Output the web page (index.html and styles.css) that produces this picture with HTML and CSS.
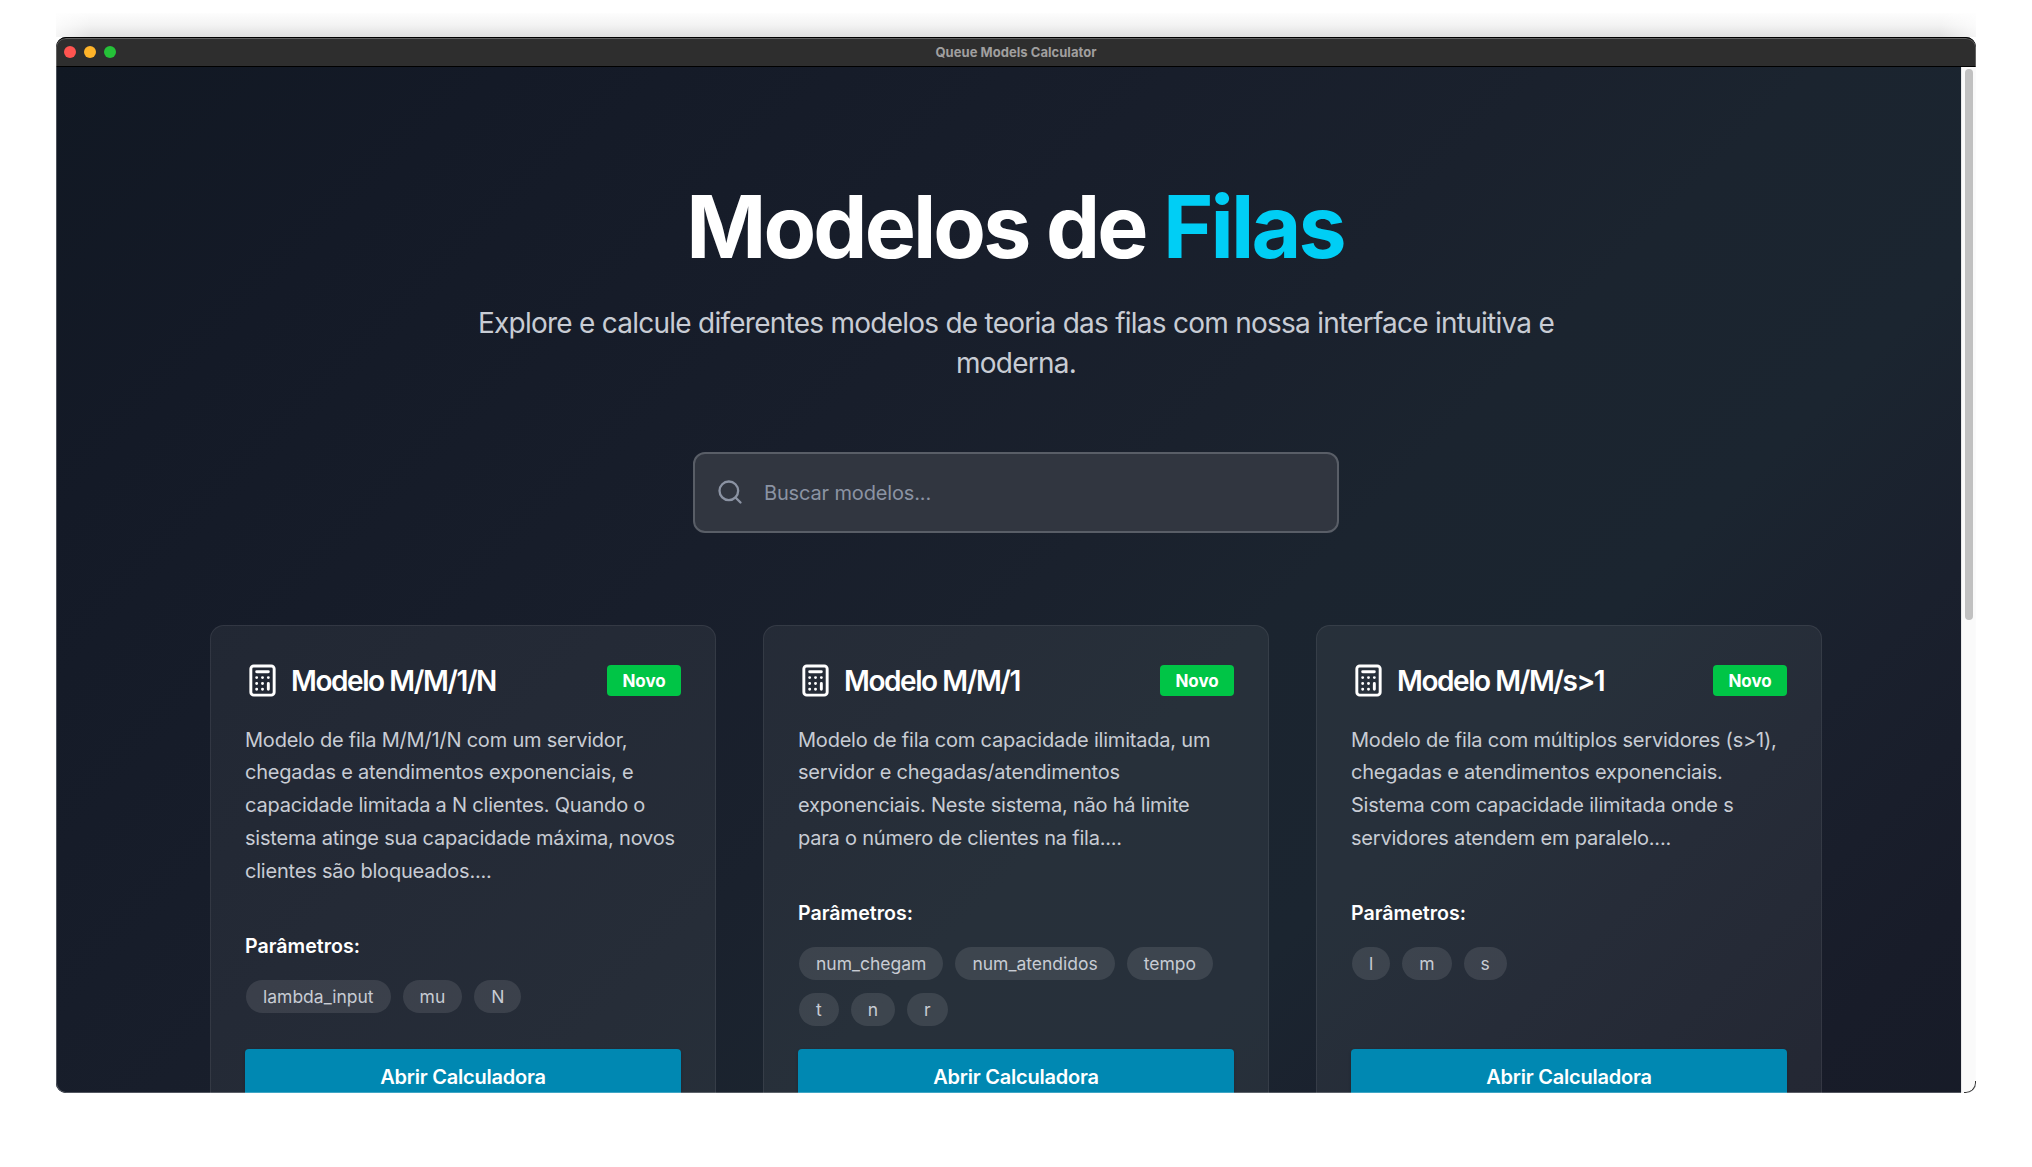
FILE: index.html
```
<!DOCTYPE html>
<html lang="pt-BR">
<head>
<meta charset="utf-8">
<title>Queue Models Calculator</title>
<link rel="stylesheet" href="styles.css">
</head>
<body>
<svg class="sprite" aria-hidden="true">
  <symbol id="calculator" viewBox="0 0 24 24">
    <rect x="4" y="2" width="16" height="20" rx="2"/>
    <path d="M8 6h8M16 14v4M16 10h.01M12 10h.01M8 10h.01M12 14h.01M8 14h.01M12 18h.01M8 18h.01"/>
  </symbol>
  <symbol id="search" viewBox="0 0 24 24">
    <circle cx="11" cy="11" r="8"/>
    <path d="m21 21-4.3-4.3"/>
  </symbol>
</svg>
<div class="stage">
  <div class="glow"></div>
  <div class="window">
    <header class="titlebar">
      <div class="lights"><i class="light close"></i><i class="light minimize"></i><i class="light maximize"></i></div>
      <span class="window-title">Queue Models Calculator</span>
    </header>
    <div class="viewport">
      <main class="page">
        <section class="hero">
          <h1 class="headline">Modelos de <span class="accent">Filas</span></h1>
          <p class="lead">Explore e calcule diferentes modelos de teoria das filas com nossa interface intuitiva e moderna.</p>
          <div class="search">
            <svg class="search-icon"><use href="#search"/></svg>
            <span class="placeholder">Buscar modelos...</span>
          </div>
        </section>
        <section class="cards">
          <article class="card">
            <div class="card-head">
              <svg class="calc-icon"><use href="#calculator"/></svg>
              <h2 class="card-title">Modelo M/M/1/N</h2>
              <span class="badge">Novo</span>
            </div>
            <p class="desc">Modelo de fila M/M/1/N com um servidor, chegadas e atendimentos exponenciais, e capacidade limitada a N clientes. Quando o sistema atinge sua capacidade máxima, novos clientes são bloqueados....</p>
            <h3 class="params-title">Parâmetros:</h3>
            <div class="params"><span class="pill">lambda_input</span><span class="pill">mu</span><span class="pill">N</span></div>
            <div class="button">Abrir Calculadora</div>
          </article>
          <article class="card">
            <div class="card-head">
              <svg class="calc-icon"><use href="#calculator"/></svg>
              <h2 class="card-title">Modelo M/M/1</h2>
              <span class="badge">Novo</span>
            </div>
            <p class="desc">Modelo de fila com capacidade ilimitada, um servidor e chegadas/atendimentos exponenciais. Neste sistema, não há limite para o número de clientes na fila....</p>
            <h3 class="params-title">Parâmetros:</h3>
            <div class="params"><span class="pill">num_chegam</span><span class="pill">num_atendidos</span><span class="pill">tempo</span><span class="pill">t</span><span class="pill">n</span><span class="pill">r</span></div>
            <div class="button">Abrir Calculadora</div>
          </article>
          <article class="card">
            <div class="card-head">
              <svg class="calc-icon"><use href="#calculator"/></svg>
              <h2 class="card-title">Modelo M/M/s&gt;1</h2>
              <span class="badge">Novo</span>
            </div>
            <p class="desc">Modelo de fila com múltiplos servidores (s&gt;1), chegadas e atendimentos exponenciais. Sistema com capacidade ilimitada onde s servidores atendem em paralelo....</p>
            <h3 class="params-title">Parâmetros:</h3>
            <div class="params"><span class="pill">l</span><span class="pill">m</span><span class="pill">s</span></div>
            <div class="button">Abrir Calculadora</div>
          </article>
        </section>
      </main>
      <div class="scrollbar"><div class="thumb"></div></div>
    </div>
    <div class="rim"></div>
  </div>
</div>
</body>
</html>
```
FILE: styles.css
```
* { box-sizing: border-box; }

body {
  margin: 0;
  background: #fff;
  font-family: Inter, "Liberation Sans", sans-serif;
  overflow: hidden;
}

h1, h2, h3, p { margin: 0; }

.sprite { display: none; }

.stage {
  width: 1920px;
  height: 1167px;
  margin-left: 56px;
  padding-top: 13px;
}

/* soft window shadow above the title bar */
.glow {
  height: 24px;
  background:
    linear-gradient(to right, rgba(255,255,255,.7), rgba(255,255,255,0) 36px, rgba(255,255,255,0) calc(100% - 36px), rgba(255,255,255,.7)),
    linear-gradient(#fdfdfd, #f3f3f3 50%, #dfdfdf);
}

.window {
  position: relative;
  height: 1056px;
  overflow: hidden;
  border-radius: 10px;
  display: flex;
  flex-direction: column;
  background: #141b27;
}

.titlebar {
  height: 30px;
  flex: none;
  display: grid;
  grid-template-columns: 1fr auto 1fr;
  align-items: center;
  padding: 0 8px;
  background: #2e2e2e;
  border-bottom: 1px solid #000;
}

.lights { display: flex; gap: 8px; }
.light { width: 12px; height: 12px; border-radius: 50%; }
.close { background: #ff5450; }
.minimize { background: #ffb429; }
.maximize { background: #25c138; }

.window-title {
  font-size: 13px;
  font-weight: 700;
  line-height: 16px;
  letter-spacing: .04px;
  color: #a09f9f;
}

.viewport {
  flex: 1;
  display: flex;
  min-height: 0;
  overflow: hidden;
}

.page {
  width: 1905px;
  height: 1850px;
  flex: none;
  padding: 117px 0 0 154px;
  background: linear-gradient(135deg, #111823 0%, #141a27 12%, #181e2b 30%, #1a212d 40%, #1b242f 47%, #1b2530 56%, #1a202d 64%, #181c29 73%, #161b27 82%, #101722 100%);
}

.hero {
  width: 1612px;
  display: flex;
  flex-direction: column;
  align-items: center;
  text-align: center;
}

.headline {
  font-size: 86px;
  font-weight: 700;
  line-height: 86px;
  letter-spacing: -2.9px;
  color: #fff;
  margin-left: -2px;
}

.accent { color: #00cef5; }

.lead {
  width: 1130px;
  margin-top: 32.5px;
  font-size: 28px;
  line-height: 40px;
  letter-spacing: -.75px;
  color: #c8ccd4;
}

.search {
  width: 646px;
  height: 81px;
  margin-top: 69.5px;
  padding-left: 21px;
  display: flex;
  align-items: center;
  gap: 20px;
  border: 2px solid #595e67;
  border-radius: 12px;
  background: #313640;
}

.search-icon {
  width: 28px;
  height: 28px;
  margin-bottom: 2px;
  fill: none;
  stroke: #8b93a3;
  stroke-width: 2;
  stroke-linecap: round;
}

.placeholder {
  font-size: 20px;
  line-height: 28px;
  letter-spacing: -.15px;
  color: #8b93a3;
}

.cards {
  width: 1612px;
  margin-top: 92px;
  display: grid;
  grid-template-columns: repeat(3, 506px);
  justify-content: space-between;
}

.card {
  display: flex;
  flex-direction: column;
  padding: 36.5px 34px 34px;
  border: 1px solid rgba(255,255,255,.07);
  border-radius: 14px;
  background: rgba(255,255,255,.055);
}

.card-head { display: flex; align-items: center; height: 36px; }

.calc-icon {
  width: 35px;
  height: 35px;
  flex: none;
  fill: none;
  stroke: #fff;
  stroke-width: 2;
  stroke-linecap: round;
  stroke-linejoin: round;
}

.card-title {
  flex: 1;
  margin-left: 11px;
  font-size: 28px;
  font-weight: 600;
  line-height: 36px;
  letter-spacing: -1.43px;
  color: #fff;
}

.badge {
  width: 74px;
  height: 31px;
  border-radius: 4px;
  background: #00c546;
  color: #fff;
  font-size: 17px;
  font-weight: 700;
  line-height: 32px;
  letter-spacing: -.1px;
  text-align: center;
}

.desc {
  margin-top: 25.1px;
  font-size: 20px;
  line-height: 32.85px;
  letter-spacing: -.21px;
  color: #c8ccd4;
}

.params-title {
  margin-top: 44.2px;
  font-size: 19.6px;
  font-weight: 600;
  line-height: 29px;
  color: #fff;
}

.params {
  display: flex;
  flex-wrap: wrap;
  gap: 13px 12px;
  margin: 19px 0 22.8px 1px;
}

.pill {
  height: 33px;
  padding: 0 17px;
  border-radius: 17px;
  background: rgba(255,255,255,.1);
  color: #c8ccd4;
  font-size: 17.5px;
  line-height: 34px;
}

.button {
  margin-top: auto;
  height: 56px;
  border-radius: 4px;
  background: #0088b2;
  box-shadow: 0 1px 3px rgba(0,0,0,.2);
  color: #fff;
  font-size: 20px;
  font-weight: 600;
  line-height: 56px;
  letter-spacing: -.22px;
  text-align: center;
}

.scrollbar {
  width: 15px;
  flex: none;
  padding: 2px 3px 0 4px;
  background: #fafafa;
  border-left: 1px solid #e8e8e8;
}

.thumb {
  width: 8px;
  height: 551px;
  margin-left: -1px;
  border-radius: 4px;
  background: #c1c1c1;
}

/* hairline edge drawn over the window content */
.rim {
  position: absolute;
  inset: 0;
  border-radius: 10px;
  border-top: 1px solid #000;
  box-shadow: inset 0 0 0 1px rgba(255,255,255,.25);
  pointer-events: none;
}

.rim::after {
  content: "";
  position: absolute;
  right: 0;
  bottom: 0;
  width: 11px;
  height: 11px;
  border: solid #333;
  border-width: 0 1px 1px 0;
  border-bottom-right-radius: 10px;
}
```
